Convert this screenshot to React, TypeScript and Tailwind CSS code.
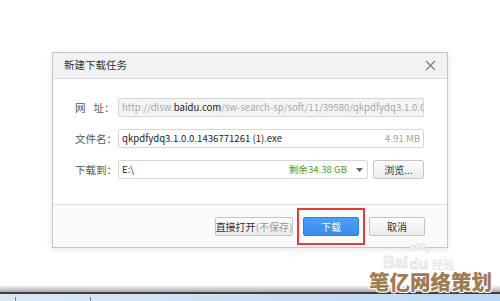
import React from "react";

const F = { fontFamily: '"Noto Sans CJK SC", "Noto Sans", sans-serif' };

export default function App() {
  return (
    <div
      className="relative w-[500px] h-[301px] bg-white flex flex-col overflow-hidden"
      style={F}
    >
      <div className="pt-[52px] pl-[52px]">
        <div className="w-[396px] h-[196px] border border-[#c6c6c6] bg-[#fcfcfc] flex flex-col shadow-[0_1px_6px_rgba(0,0,0,0.12)]">
          {/* title bar */}
          <div className="h-[26px] bg-[#f1f2f4] border-b border-[#d9dadc] flex items-center justify-between pl-[11px] pr-[10px]">
            <span className="text-[10.5px] leading-none text-[#333]">新建下载任务</span>
            <svg width="11" height="11" viewBox="0 0 11 11" className="mr-[1px]">
              <path d="M1 1 L10 10 M10 1 L1 10" stroke="#7a7a7a" strokeWidth="1.1" />
            </svg>
          </div>
          {/* body */}
          <div className="h-[126px] bg-white border-b border-[#dedede] pl-[22px] pr-[22px] pt-[19px] flex flex-col gap-[12px]">
            <div className="flex items-center h-[19px]">
              <div className="w-[43px] text-[10.5px] text-[#555] flex">
                <span>网</span>
                <span className="ml-[8px]">址：</span>
              </div>
              <div className="w-[306px] h-[19px] border border-[#d6d6d6] rounded-[2px] bg-[#f4f4f4] flex items-center pl-[3px] overflow-hidden whitespace-nowrap text-[9.6px] text-[#a8a8a8]">
                <span>http://dlsw.</span>
                <span className="text-[#222]">baidu.com</span>
                <span>/sw-search-sp/soft/11/39580/qkpdfydq3.1.0.0.1436771261</span>
              </div>
            </div>
            <div className="flex items-center h-[19px]">
              <div className="w-[43px] text-[10.5px] text-[#555]">文件名：</div>
              <div className="w-[306px] h-[19px] border border-[#d6d6d6] rounded-[2px] bg-white flex items-center justify-between pl-[3px] pr-[3px] whitespace-nowrap text-[9.6px]">
                <span className="text-[#222]">qkpdfydq3.1.0.0.1436771261 (1).exe</span>
                <span className="text-[#a0a0a0]">4.91 MB</span>
              </div>
            </div>
            <div className="flex items-center h-[19px]">
              <div className="w-[43px] text-[10.5px] text-[#555]">下载到：</div>
              <div className="w-[250px] h-[19px] border border-[#d6d6d6] rounded-[2px] bg-white flex items-center pl-[3px] pr-[4px] whitespace-nowrap text-[9.6px]">
                <span className="text-[#222] flex-1">E:\</span>
                <span className="text-[#4b9e2e]">剩余34.38 GB</span>
                <svg width="7" height="4" viewBox="0 0 7 4" className="ml-[9px]">
                  <path d="M0 0 L7 0 L3.5 4 Z" fill="#666" />
                </svg>
              </div>
              <button className="ml-[5px] w-[51px] h-[19px] border border-[#c6c6c6] rounded-[2px] bg-gradient-to-b from-[#fdfdfd] to-[#ececec] text-[10px] text-[#333] flex items-center justify-center">
                浏览...
              </button>
            </div>
          </div>
          {/* footer */}
          <div className="flex-1 bg-[#fafafa] flex justify-end items-start pt-[12px] pr-[22px] gap-[10px]">
            <button className="w-[78px] h-[19px] border border-[#c4c4c4] rounded-[2px] bg-gradient-to-b from-[#fdfdfd] to-[#ececec] text-[10px] flex items-center justify-center whitespace-nowrap">
              <span className="text-[#333]">直接打开</span>
              <span className="text-[#999]">(不保存)</span>
            </button>
            <div className="relative">
              <button className="w-[56px] h-[19px] border border-[#2f82dc] rounded-[2px] bg-gradient-to-b from-[#4da0f5] to-[#3a8cea] text-[10px] text-white flex items-center justify-center">
                下载
              </button>
              <div className="absolute left-[-6px] right-[-6px] top-[-9px] bottom-[-9px] border-2 border-[#e8393c]" />
            </div>
            <button className="w-[56px] h-[19px] border border-[#c4c4c4] rounded-[2px] bg-gradient-to-b from-[#fdfdfd] to-[#ececec] text-[10px] text-[#333] flex items-center justify-center">
              取消
            </button>
          </div>
        </div>
      </div>
      <div className="flex-1" />
      <div className="h-[7px] bg-gradient-to-b from-[#ffffff] to-[#a9a9a9]" />
      <div className="h-[2px] bg-[#3e3e3e]" />
      <div className="relative h-[7px] bg-gradient-to-r from-[#dbe9f6] via-[#c9e0f6] to-[#b9d8f6]">
        <div className="absolute left-[15px] top-[3px] w-[1px] h-[4px] bg-[#8a7a9a]" />
        <div className="absolute left-[90px] top-[3px] w-[1px] h-[4px] bg-[#8a7a9a]" />
      </div>

      {/* Baidu watermark */}
      <div className="absolute left-[383px] top-[243px] flex items-end">
        <span
          className="text-[16px] leading-none font-bold"
          style={{ fontFamily: '"Liberation Sans", sans-serif', WebkitTextStroke: "0.6px #d8d8d8", color: "#f6f6f6" }}
        >
          Bai
        </span>
        <div className="relative flex flex-col items-center">
          <svg width="22" height="13" viewBox="0 0 22 13">
            <ellipse cx="5" cy="5" rx="2.4" ry="3" fill="#f2f2f2" stroke="#dcdcdc" strokeWidth="0.7" />
            <ellipse cx="10" cy="3" rx="2.4" ry="3" fill="#f2f2f2" stroke="#dcdcdc" strokeWidth="0.7" />
            <ellipse cx="15" cy="3.5" rx="2.4" ry="3" fill="#f2f2f2" stroke="#dcdcdc" strokeWidth="0.7" />
            <ellipse cx="19" cy="7" rx="2" ry="2.6" fill="#f2f2f2" stroke="#dcdcdc" strokeWidth="0.7" />
          </svg>
          <span
            className="text-[15px] leading-none font-bold"
            style={{ fontFamily: '"Liberation Sans", sans-serif', WebkitTextStroke: "0.6px #d8d8d8", color: "#f6f6f6" }}
          >
            du
          </span>
        </div>
        <span className="ml-[2px] text-[11px] leading-none text-[#e0e0e0] mb-[1px]">经验</span>
      </div>

      {/* brand watermark */}
      <div
        className="absolute left-[369px] top-[271px] text-[20.5px] leading-none font-black text-[#9e7b50] whitespace-nowrap"
        style={{ textShadow: "1px 1px 0 #fff, -1px -1px 0 #fff, 1px -1px 0 #fff, -1px 1px 0 #fff" }}
      >
        笔亿网络策划
      </div>
    </div>
  );
}
